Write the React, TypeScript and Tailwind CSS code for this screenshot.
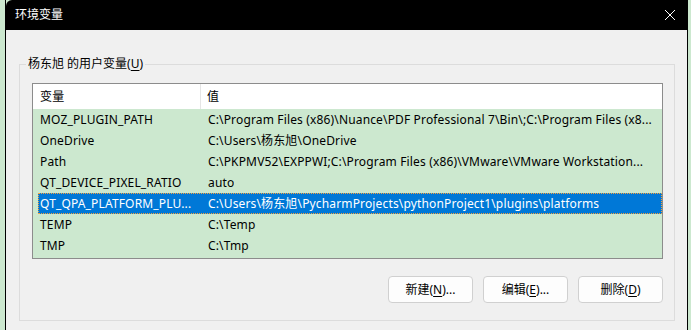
import React from "react";

type Row = { name: string; value: string };

const rows: Row[] = [
  {
    name: "MOZ_PLUGIN_PATH",
    value:
      "C:\\Program Files (x86)\\Nuance\\PDF Professional 7\\Bin\\;C:\\Program Files (x8...",
  },
  { name: "OneDrive", value: "C:\\Users\\杨东旭\\OneDrive" },
  {
    name: "Path",
    value:
      "C:\\PKPMV52\\EXPPWI;C:\\Program Files (x86)\\VMware\\VMware Workstation...",
  },
  { name: "QT_DEVICE_PIXEL_RATIO", value: "auto" },
  {
    name: "QT_QPA_PLATFORM_PLU...",
    value: "C:\\Users\\杨东旭\\PycharmProjects\\pythonProject1\\plugins\\platforms",
  },
  { name: "TEMP", value: "C:\\Temp" },
  { name: "TMP", value: "C:\\Tmp" },
];

const SELECTED = 4;

function Btn({ label, mnemonic, suffix }: { label: string; mnemonic: string; suffix: string }) {
  return (
    <button className="w-[85px] h-[27px] rounded-[4px] border border-[#d0d0d0] bg-[#fdfdfd] text-[12px] text-black flex items-center justify-center">
      {label}(<span className="underline underline-offset-2">{mnemonic}</span>){suffix}
    </button>
  );
}

export default function App() {
  return (
    <div
      className="w-[691px] h-[330px] flex bg-[#cce8cf] overflow-hidden"
      style={{ fontFamily: '"Noto Sans", "Noto Sans CJK SC", sans-serif' }}
    >
      <div className="w-[5px] shrink-0" />
      <div className="w-[683px] shrink-0 flex flex-col border-x border-black">
        {/* title bar */}
        <div className="h-[30px] bg-black rounded-tl-[6px] flex items-center justify-between pl-[9px] pr-[10px]">
          <span className="text-white text-[12px]">环境变量</span>
          <svg width="12" height="12" viewBox="0 0 12 12" className="mr-[1px]">
            <path d="M1 1 L11 11 M11 1 L1 11" stroke="#fff" strokeWidth="1" />
          </svg>
        </div>
        {/* body */}
        <div className="flex-1 bg-[#f0f0f0] pt-[34px] pl-[13px]">
          <div className="relative w-[656px] h-[257px] border border-[#dcdcdc] pt-[18px] pl-[12px]">
            <div className="absolute left-[6px] top-[-9px] px-[2px] bg-[#f0f0f0] text-[12px] leading-[16px] text-black">
              杨东旭 的用户变量(<span className="underline underline-offset-2">U</span>)
            </div>
            {/* list */}
            <div className="w-[631px] h-[176px] border border-[#8c8c8c] bg-[#cce8cf] flex flex-col tracking-[0.15px]">
              <div className="h-[25px] bg-white flex text-[12px] text-black">
                <div className="w-[168px] pl-[7px] flex items-center border-r border-[#e5e5e5]">变量</div>
                <div className="flex-1 pl-[6px] flex items-center">值</div>
              </div>
              {rows.map((r, i) => (
                <div
                  key={i}
                  className={
                    i === SELECTED
                      ? "h-[21px] ml-[5px] pt-[1px] flex items-center text-[12px] text-white bg-[#0078d7] border border-dotted border-[#f7a13a] whitespace-nowrap overflow-hidden"
                      : "h-[21px] ml-[5px] pt-[1px] flex items-center text-[12px] text-black border border-transparent whitespace-nowrap overflow-hidden"
                  }
                >
                  <div className="w-[163px] pl-[1px] shrink-0 overflow-hidden">{r.name}</div>
                  <div className="pl-[6px] overflow-hidden">{r.value}</div>
                </div>
              ))}
            </div>
            {/* buttons */}
            <div className="w-[631px] flex justify-end gap-[10px] mt-[17px]">
              <Btn label="新建" mnemonic="N" suffix="..." />
              <Btn label="编辑" mnemonic="E" suffix="..." />
              <Btn label="删除" mnemonic="D" suffix="" />
            </div>
          </div>
        </div>
      </div>
      <div className="flex-1" />
    </div>
  );
}
